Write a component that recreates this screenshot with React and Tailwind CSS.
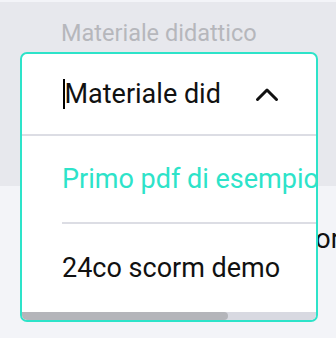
import React from "react";

const font = { fontFamily: "Roboto, 'Noto Sans', sans-serif" };

function ChevronUp() {
  return (
    <svg width="24" height="15" viewBox="0 0 24 15" fill="none">
      <path d="M2.5 12.5 L12 3 L21.5 12.5" stroke="#111" strokeWidth="3" strokeLinecap="round" strokeLinejoin="round" />
    </svg>
  );
}

export default function App() {
  return (
    <div className="relative w-[336px] h-[338px] overflow-hidden bg-[#f3f4f8]" style={font}>
      {/* page behind */}
      <div className="mt-[2px] h-[184px] bg-[#e7e8ed] pl-[61px] pt-[17px]">
        <p className="text-[23.5px] leading-[28px] text-[#b6b7bc] whitespace-nowrap">Materiale didattico</p>
      </div>
      <div className="pl-[277px] pt-[37px]">
        <p className="text-[27px] leading-[32px] text-[#111] whitespace-nowrap">Tutor</p>
      </div>

      {/* dropdown */}
      <div className="absolute left-[20px] top-[52px] w-[298px] h-[270px] rounded-[7px] border-2 border-[#2de3c9] bg-white overflow-hidden flex flex-col">
        <div className="h-[82px] flex items-center pl-[41px] pr-[37px] border-b-2 border-[#dcdde4]">
          <span className="w-[1.5px] h-[30px] bg-black" />
          <span className="text-[27px] leading-[32px] text-[#111] whitespace-nowrap">Materiale did</span>
          <span className="ml-auto flex"><ChevronUp /></span>
        </div>
        <div className="flex-1 overflow-hidden">
          <div className="w-[420px] pl-[40px]">
            <div className="h-[88px] flex items-center border-b-2 border-[#dcdde4]">
              <span className="text-[27px] leading-[32px] text-[#2de3c9] whitespace-nowrap">Primo pdf di esempio</span>
            </div>
            <div className="h-[88px] flex items-center">
              <span className="text-[27px] leading-[32px] text-[#111] whitespace-nowrap">24co scorm demo</span>
            </div>
          </div>
        </div>
        <div className="h-[8px] bg-[#d8d9e1] flex">
          <div className="w-[206px] h-full rounded-r-full bg-[#b4b5ba]" />
        </div>
      </div>
    </div>
  );
}
